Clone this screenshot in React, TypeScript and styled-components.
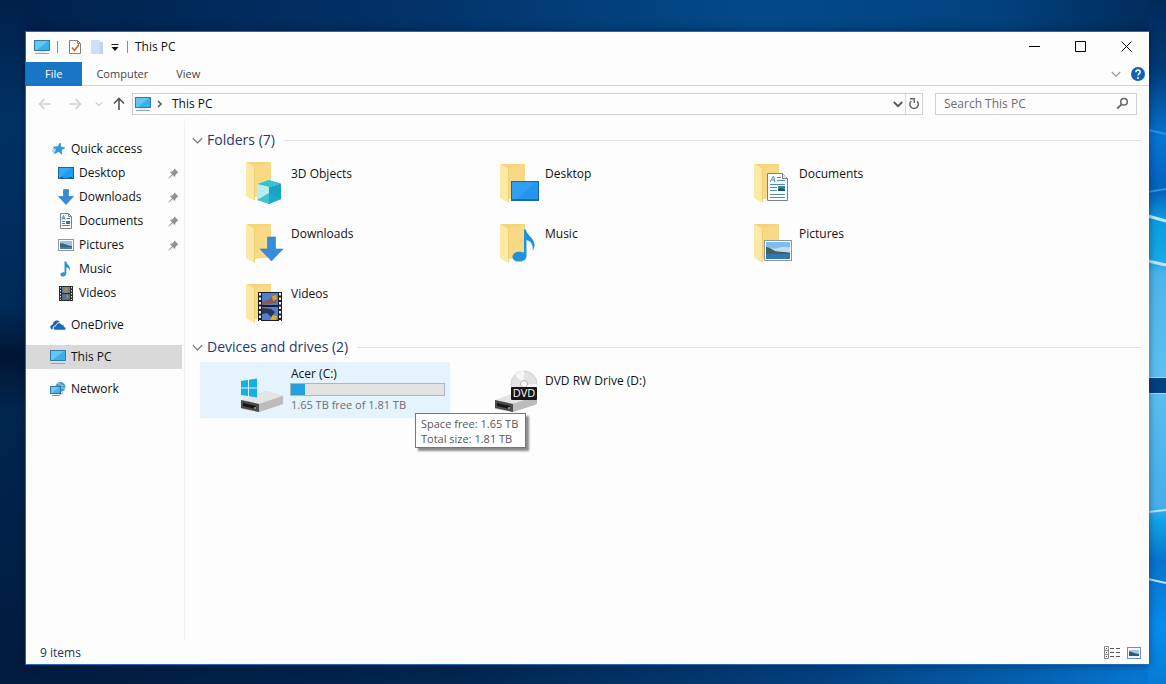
import React from "react";
import styled, { createGlobalStyle } from "styled-components";

const GlobalStyle = createGlobalStyle`
  *, *::before, *::after { box-sizing: border-box; }
  body {
    margin: 0;
    font-family: "Open Sans", "Noto Sans", sans-serif;
    font-size: 12px;
    line-height: 16px;
    color: #111;
  }
  button, input { font: inherit; color: inherit; }
  h1, h2, ul { margin: 0; padding: 0; font-weight: 400; }
  ul { list-style: none; }
`;

/* ---------- Layout ---------- */

const Desktop = styled.div`
  position: relative;
  isolation: isolate;
  display: flex;
  min-height: 100vh;
  padding: 31px 17px 19px 25px;
  background: #00244d;
`;

const Wallpaper = styled.svg`
  position: absolute;
  inset: 0;
  z-index: -1;
  width: 100%;
  height: 100%;
`;

const Window = styled.main`
  flex: 1;
  min-width: 0;
  display: flex;
  flex-direction: column;
  border: 1px solid #1a6eb8;
  border-right-width: 0;
  background: #fdfdfd;
  box-shadow: 0 0 8px rgba(0, 10, 40, 0.45);
`;

const TitleBar = styled.header`
  display: flex;
  height: 30px;
  padding-left: 7px;
`;

const QuickTools = styled.div`
  display: flex;
  align-items: center;
  flex: 1;
`;

const IconButton = styled.button<{ $w: number; $h?: number }>`
  display: flex;
  align-items: center;
  justify-content: center;
  width: ${(p) => p.$w}px;
  height: ${(p) => p.$h ?? 20}px;
  padding: 0;
  border: 0;
  background: transparent;
`;

const Divider = styled.span`
  width: 1px;
  height: 12px;
  margin: 0 7px 0 6px;
  background: #8b8b8b;
`;

const Title = styled.h1`
  font-size: 12px;
  line-height: 16px;
`;

const Ribbon = styled.nav`
  display: flex;
  align-items: center;
  height: 24px;
  border-bottom: 1px solid #d4d5d6;
  color: #444;
`;

const Tab = styled.button<{ $active?: boolean }>`
  height: 24px;
  margin-bottom: -1px;
  padding: ${(p) => (p.$active ? "0 20px 0 19px" : "0 14px")};
  border: 0;
  background: ${(p) => (p.$active ? "#1976c5" : "transparent")};
  color: ${(p) => (p.$active ? "#fff" : "#444")};
  font-size: 11px;
`;

const Spacer = styled.span`
  flex: 1;
`;

const AddressRow = styled.div`
  display: flex;
  align-items: center;
  height: 35px;
  padding: 0 12px 0 6px;
`;

const AddressBox = styled.div`
  display: flex;
  align-items: center;
  flex: 1;
  height: 22px;
  border: 1px solid #d0d0d0;
`;

const Crumbs = styled.div`
  flex: 1;
  padding-left: 5px;
`;

const Crumb = styled.a`
  color: #111;
  text-decoration: none;
`;

const Refresh = styled(IconButton)`
  border-left: 1px solid #d9d9d9;
`;

const SearchBox = styled.label`
  display: flex;
  align-items: center;
  width: 202px;
  height: 22px;
  margin-left: 12px;
  padding: 0 7px 0 8px;
  border: 1px solid #d0d0d0;
`;

const SearchInput = styled.input`
  flex: 1;
  min-width: 0;
  padding: 0;
  border: 0;
  outline: 0;
  background: transparent;
  &::placeholder { color: #6d6d6d; opacity: 1; }
`;

const Body = styled.div`
  display: flex;
  flex: 1;
`;

const Sidebar = styled.nav`
  width: 159px;
  padding: 16px 2px 0 0;
  border-right: 1px solid #f0f0f0;
`;

const NavGroup = styled.ul`
  margin-bottom: 8px;
`;

const NavLink = styled.a<{ $level: number; $current?: boolean }>`
  display: flex;
  align-items: center;
  height: 24px;
  gap: 5px;
  padding: 0 0 0 ${(p) => (p.$level ? 32 : 24)}px;
  background: ${(p) => (p.$current ? "#d9d9d9" : "transparent")};
  color: #111;
  text-decoration: none;
`;

const NavLabel = styled.span`
  flex: 1;
`;

const PinSlot = styled.span`
  display: flex;
  padding-right: 3px;
`;

const Content = styled.div`
  flex: 1;
  min-width: 0;
  padding: 8px 8px 0 7px;
`;

const SectionHeader = styled.div`
  display: flex;
  align-items: center;
  height: 22px;
`;

const SectionTitle = styled.h2`
  padding: 0 9px 0 4px;
  font-size: 14px;
  line-height: 22px;
  color: #1f3a6e;
`;

const Rule = styled.span`
  flex: 1;
  height: 1px;
  background: #e2e2e2;
`;

const Tiles = styled.ul`
  display: grid;
  grid-template-columns: repeat(auto-fill, 250px);
  gap: 4px;
  padding: 4px 0 5px 8px;
`;

const Tile = styled.li<{ $hover?: boolean }>`
  position: relative;
  display: flex;
  height: 56px;
  padding: 4px 5px 0 40px;
  background: ${(p) => (p.$hover ? "#e5f3fd" : "transparent")};
`;

const TileLink = styled.a<{ $drive?: boolean }>`
  display: flex;
  flex: 1;
  gap: ${(p) => (p.$drive ? 2 : 3)}px;
  color: #111;
  text-decoration: none;
`;

const TileText = styled.div<{ $drive?: boolean }>`
  flex: 1;
  display: flex;
  flex-direction: column;
  padding-top: ${(p) => (p.$drive ? 0 : 7)}px;
`;

const DriveLabel = styled.span<{ $muted?: boolean }>`
  padding-left: 1px;
  font-size: ${(p) => (p.$muted ? 11 : 12)}px;
  line-height: 16px;
  color: ${(p) => (p.$muted ? "#6d6d6d" : "#111")};
`;

const Meter = styled.div`
  height: 13px;
  margin: 1px 0;
  border: 1px solid #a9b7c4;
  background: #e3e3e3;
`;

const MeterFill = styled.div`
  height: 100%;
  background: #26a0da;
`;

const Tooltip = styled.div`
  position: absolute;
  left: 215px;
  top: 51px;
  z-index: 1;
  padding: 2px 7px 1px 5px;
  border: 1px solid #767676;
  background: #fff;
  box-shadow: 3px 3px 2px rgba(0, 0, 0, 0.45);
  font-size: 11px;
  line-height: 15px;
  color: #575757;
  white-space: pre;
`;

const StatusBar = styled.footer`
  display: flex;
  align-items: center;
  height: 23px;
  padding: 0 4px 0 14px;
  color: #1f3357;
`;

/* ---------- Icons ---------- */

const MonitorIcon = ({ compact = false }: { compact?: boolean }) => (
  <svg width={compact ? 16 : 18} height="16" viewBox={compact ? "1 0 16 16" : "0 0 18 16"}>
    <rect x="1.5" y="1.5" width="15" height="10" fill="#36b1ee" stroke="#337ba5" />
    <path d="M2 2h13L4 11H2z" fill="#7cd2f8" opacity=".65" />
    <path d="M2 14.500h14" stroke="#8aa9bd" />
    <path d="M5 13h8" stroke="#cfdbe2" />
  </svg>
);

const PropertiesIcon = () => (
  <svg width="14" height="16" viewBox="0 0 14 16">
    <path d="M1.500 1.500h8l3 3v10h-11z" fill="#fff" stroke="#8b7f7a" />
    <path d="M9.500 1.500v3h3" fill="none" stroke="#8b7f7a" />
    <path d="M4 8.500l2.500 3L11 5.500" fill="none" stroke="#d2602f" strokeWidth="1.600" />
  </svg>
);

const NewFolderIcon = () => (
  <svg width="14" height="16" viewBox="0 0 14 16">
    <path d="M1 1h9v2h3v12H1z" fill="#cfdff4" />
    <path d="M10 3h3v12h-3z" fill="#bfd2ec" />
  </svg>
);

const CustomizeIcon = () => (
  <svg width="8" height="9" viewBox="0 0 8 9">
    <path d="M.5 1.500h7" stroke="#222" />
    <path d="M.5 4h7L4 8z" fill="#111" />
  </svg>
);

const Chevron = ({ color = "#777", width = 1.2, size = 10 }: { color?: string; width?: number; size?: number }) => (
  <svg width={size} height={size} viewBox="0 0 10 10">
    <path d="M.8 3L5 7.200 9.200 3" fill="none" stroke={color} strokeWidth={width} />
  </svg>
);

const ArrowIcon = ({ dir, color }: { dir: number; color: string }) => (
  <svg width="14" height="14" viewBox="0 0 14 14">
    <path
      d="M13 7H2M6.500 2L1.500 7l5 5"
      transform={`rotate(${dir} 7 7)`}
      fill="none"
      stroke={color}
      strokeWidth="1.600"
    />
  </svg>
);

const RefreshIcon = () => (
  <svg width="12" height="13" viewBox="0 0 12 13">
    <path d="M3.200 4.200A4.200 4.200 0 1 0 9 4.200" fill="none" stroke="#666" strokeWidth="1.500" />
    <path d="M2 1.700h4.300v4.300" fill="none" stroke="#666" strokeWidth="1.400" />
  </svg>
);

const SearchIcon = () => (
  <svg width="13" height="13" viewBox="0 0 13 13">
    <circle cx="8" cy="4.800" r="3.300" fill="none" stroke="#666" strokeWidth="1.500" />
    <path d="M5.500 7.300L1.200 11.600" stroke="#666" strokeWidth="1.900" />
  </svg>
);

const HelpIcon = () => (
  <svg width="14" height="14" viewBox="0 0 14 14">
    <circle cx="7" cy="7" r="7" fill="#0f62b8" />
    <path d="M4.900 5.300c0-3 4.500-2.800 4.300-.2C9.100 6.700 7 6.700 7 8.600" fill="none" stroke="#fff" strokeWidth="1.500" />
    <circle cx="7" cy="10.900" r="1" fill="#fff" />
  </svg>
);

const StarIcon = () => (
  <svg width="16" height="16" viewBox="0 0 16 16">
    <path d="M10.300 2l.5 4 4 .8-3.500 2.100.6 4.300-3.200-2.800-3.800 2.200 1.300-4.100L3.400 6l4.200-.2z" fill="#2f9be0" stroke="#2180bd" strokeWidth=".6" />
    <path d="M2.500 7.500l2.500 1M2 10h3.500M3 12.500l2-1.500" stroke="#5ab0e6" />
  </svg>
);

const DesktopIcon = () => (
  <svg width="16" height="16" viewBox="0 0 16 16">
    <rect x=".5" y="2.500" width="15" height="11" fill="#1f9bf0" stroke="#1b659c" />
    <path d="M1 3h11L2 13H1z" fill="#48b3f8" opacity=".6" />
    <path d="M2 12.500h3M11 12.500h3" stroke="#0f5e9c" />
  </svg>
);

const DownIcon = () => (
  <svg width="16" height="16" viewBox="0 0 16 16">
    <path d="M5.500 0.500h5v7H15.500L8 15.500.5 7.500h5z" fill="#388bd6" stroke="#2f76b8" strokeWidth=".6" />
  </svg>
);

const DocIcon = () => (
  <svg width="16" height="16" viewBox="0 0 16 16">
    <path d="M2.500.5h8l3 3v12h-11z" fill="#fff" stroke="#7a848c" />
    <path d="M10.500.5v3h3" fill="none" stroke="#7a848c" />
    <path d="M4 6.500l1.500-4L7 6.500M4.500 5.500h2M8.500 5.500H12M4 8.500h3M4 10.500h3M4 12.500h8" fill="none" stroke="#3e86b5" />
    <rect x="8" y="8" width="4" height="3" fill="#2d76aa" />
  </svg>
);

const PictureIcon = () => (
  <svg width="16" height="16" viewBox="0 0 16 16">
    <rect x=".5" y="2.500" width="15" height="11" fill="#fff" stroke="#8d979f" />
    <rect x="2" y="4" width="12" height="8" fill="#8fc6ec" />
    <path d="M2 6.500c3-1 5 1.500 12 2.500v1H2z" fill="#3d6477" />
    <path d="M2 10h12v2H2z" fill="#3b80b4" />
  </svg>
);

const NoteIcon = () => (
  <svg width="16" height="16" viewBox="0 0 16 16">
    <path d="M6.500.5h1.800c.4 3.500 4.700 4 3.500 9.200C11.500 7.700 10 6.600 8.300 6.300v6.200c0 3.500-5.800 4-5.800 1.200 0-2.200 2.500-2.800 4-2.200z" fill="#2795d4" />
  </svg>
);

const FilmIcon = () => (
  <svg width="16" height="16" viewBox="0 0 16 16">
    <rect x="1" y="1" width="14" height="15" fill="#2c2b2b" />
    <rect x="4" y="2" width="8" height="6" fill="#667fa5" />
    <rect x="4" y="9" width="8" height="6" fill="#55709a" />
    <path d="M7 2l3 2-1 3-3 1zM9 9l2 3-3 2z" fill="#b58c35" />
    <path d="M2.500 2v13M13.500 2v13" stroke="#dcdcdc" strokeDasharray="1.500 1.500" />
  </svg>
);

const CloudIcon = () => (
  <svg width="16" height="16" viewBox="0 0 16 16">
    <path d="M2.800 12.500C-.6 12.200-.3 8 2.600 7.800 2.800 4 7.500 2 10 5.200 7.500 5 6 6.500 5.700 8.300 3.600 8.600 2.200 10.500 2.800 12.500z" fill="#1761b4" />
    <path d="M5.600 13C2.600 13 2.900 9.200 5.800 9.100 6 5.500 10.500 4.900 11.800 7.800c2 0 2.600 1 2.500 2.300 2 .3 1.900 2.900 0 2.900z" fill="#1469be" stroke="#fdfdfd" strokeWidth=".5" />
  </svg>
);

const NetworkIcon = () => (
  <svg width="16" height="16" viewBox="0 0 16 16">
    <circle cx="10.500" cy="6" r="5" fill="#4e9fc4" />
    <path d="M8 2.500c3 0 2 2.500 5 2M9 8c2-3 4 0 6-1" stroke="#a7dbe3" fill="none" />
    <rect x=".5" y="5.500" width="10" height="7" fill="#45b4ee" stroke="#2976a8" />
    <path d="M1 6h8l-7 6H1z" fill="#93d8f8" opacity=".6" />
    <path d="M2 14.500h7l4-3" stroke="#7698ac" fill="none" />
  </svg>
);

const PinIcon = () => (
  <svg width="11" height="11" viewBox="0 0 11 11">
    <path d="M6.500.5l4 4-1.300.6-1.800 1.800-.3 2.300L4.800 6.900 1 10.500l-.5-.5 3.600-3.800L1.800 3.900l2.300-.3L5.900 1.800z" fill="#8c9298" />
  </svg>
);

const DetailsViewIcon = () => (
  <svg width="17" height="13" viewBox="0 0 17 13">
    <path d="M.5.500h4v12h-4zM.5 4.500h4M.5 8.500h4" fill="none" stroke="#888" />
    <path d="M2 2.500h1M2 6.500h1M2 10.500h1M6 2.500h4M12 2.500h4M6 6.500h4M12 6.500h4M6 10.500h4M12 10.500h4" stroke="#555" />
  </svg>
);

const LargeViewIcon = () => (
  <svg width="14" height="12" viewBox="0 0 14 12">
    <rect x=".5" y=".5" width="13" height="11" fill="#f3f8fc" stroke="#6d8fb8" />
    <rect x="2" y="3" width="10" height="6" fill="#a5c8e2" />
    <path d="M2 4.500c3 0 5 2 10 2.500v2H2z" fill="#36596e" />
  </svg>
);

const FolderArt = ({ y = 5, children }: { y?: number; children?: React.ReactNode }) => (
  <svg width="48" height="48" viewBox="0 0 48 48">
    <g transform={`translate(0 ${y})`}>
      <path d="M7 0h24v33L14 35z" fill="#f5d47b" />
      <path d="M15 4l16-4v32l-16 2z" fill="#fadc8b" opacity=".7" />
      <path d="M6 0l8.500 4.500V39L6 34z" fill="#fde8a4" />
      <path d="M14.500 4.500V38" stroke="#efca6c" strokeWidth=".8" />
    </g>
    {children}
  </svg>
);

const Art3D = () => (
  <FolderArt y={3}>
    <path d="M17 25l12-4 12 3.500-12 3.500z" fill="#2fc3d6" />
    <path d="M17 25l12 3v17l-12-4z" fill="#b9edf2" />
    <path d="M29 28l12-3.500V40l-12 5z" fill="#16a5c4" />
    <path d="M17 41l12-7 12 6-12 5z" fill="#1cb0c8" opacity=".75" />
  </FolderArt>
);

const ArtDesktop = () => (
  <FolderArt>
    <rect x="17.500" y="22.500" width="27" height="19" fill="#2397ee" stroke="#1d639c" />
    <path d="M18 23h24L22 41h-4z" fill="#3aa6f5" opacity=".55" />
    <path d="M18 40.500h26" stroke="#1671b8" />
  </FolderArt>
);

const ArtDocuments = () => (
  <FolderArt>
    <path d="M19.500 14.500h15l5 5v22h-20z" fill="#fff" stroke="#7a8288" />
    <path d="M34.500 14.500v5h5" fill="#edf1f4" stroke="#7a8288" />
    <path d="M22 23l3.500-6 1.500 6M23.500 21h3M29 18.500h4M29 21.500h8M22 25.500h15M22 28.500h7M22 31.500h7M22 35.500h15M22 38.500h15" fill="none" stroke="#4b8eb8" />
    <rect x="30" y="27" width="7" height="5" fill="#3c83b4" />
    <path d="M30 30l3-1 4 1.500V32h-7z" fill="#2b4e66" />
  </FolderArt>
);

const ArtDownloads = () => (
  <FolderArt>
    <path d="M27.500 18h8v12h7.500L31.500 42 20 30h7.500z" fill="#358ddc" stroke="#2e7dc4" strokeWidth=".6" />
  </FolderArt>
);

const ArtMusic = () => (
  <FolderArt>
    <path d="M30 10.500h2c.7 7 13.500 10.500 6.500 21.500 1.500-6-2-10-6-11v16c0 7-14 7.500-14 1 0-5 6.500-6.500 11.500-4.500z" fill="#1f93dc" />
  </FolderArt>
);

const ArtPictures = () => (
  <FolderArt>
    <rect x="16.500" y="21.500" width="27" height="20" fill="#fff" stroke="#8b979f" />
    <rect x="18" y="23" width="24" height="17" fill="#7fbcf0" />
    <path d="M18 30c4-3 6 1 12-1s8 0 12-1v5H18z" fill="#e6f2f8" opacity=".6" />
    <path d="M18 28c5 0 6 4 12 4.500s8 .5 12 1.500v1H18z" fill="#426257" />
    <path d="M18 35h24v5H18z" fill="#2f79ad" />
  </FolderArt>
);

const ArtVideos = () => (
  <FolderArt>
    <rect x="18" y="13" width="24" height="29" fill="#1f1f22" />
    <rect x="22" y="14" width="16" height="12" fill="#4f7fd0" />
    <rect x="22" y="28" width="16" height="13" fill="#4f7fd0" />
    <path d="M22 23l8-3 3-4 4 3-1 5-6 1-8 1z" fill="#8b5b52" />
    <path d="M32 17l4-1 1 4-4 2z" fill="#d6a42d" />
    <path d="M22 29l9 1 4 3-4 5-4-4-5 1z" fill="#30324f" />
    <path d="M33 36l4 1-1 4h-6z" fill="#e2ac24" />
    <path d="M20 14v28M40 14v28" stroke="#f0f0f0" strokeWidth="2" strokeDasharray="2.500 2" />
  </FolderArt>
);

const DriveBody = () => (
  <>
    <path d="M1 35l25-10 17 5v8L19 46 1 43z" fill="#c9c9c9" />
    <path d="M1 34l25-9 17 5-24 8z" fill="#e4e4e4" />
    <path d="M1 34l18 4v8L1 42z" fill="#4a4a4a" />
    <path d="M19 38l24-8v8l-24 8z" fill="#bcbcbc" />
    <path d="M3 37l13 3v3L3 40z" fill="#151515" />
    <circle cx="15" cy="42" r="1" fill="#7dc383" />
  </>
);

const ArtDisk = () => (
  <svg width="48" height="48" viewBox="0 0 48 48">
    <DriveBody />
    <path d="M1 15l7-1v7.500H1zM9 13.800l8-1.300v9H9zM1 22.500h7V30l-7-1zM9 22.500h8v9l-8-1.300z" fill="#12b0e8" />
  </svg>
);

const DvdLabel = styled.text`
  font-family: "Open Sans", sans-serif;
  font-size: 11px;
  fill: #fff;
`;

const ArtDvd = () => (
  <svg width="48" height="48" viewBox="0 0 48 48">
    <DriveBody />
    <circle cx="30" cy="18" r="13" fill="#e2e2e2" stroke="#c6c6c6" strokeWidth=".7" />
    <path d="M30 18L21 9a13 13 0 0 1 9-4zM30 18l9 9a13 13 0 0 0 4-9z" fill="#f6f6f6" />
    <circle cx="30" cy="18" r="3.500" fill="#fff" stroke="#b5b5b5" />
    <rect x="17" y="21" width="26" height="13" rx="1" fill="#161616" />
    <DvdLabel x="30" y="31" textAnchor="middle">DVD</DvdLabel>
  </svg>
);

/* ---------- Data ---------- */

const quickAccess = [
  { name: "Desktop", icon: <DesktopIcon />, pinned: true },
  { name: "Downloads", icon: <DownIcon />, pinned: true },
  { name: "Documents", icon: <DocIcon />, pinned: true },
  { name: "Pictures", icon: <PictureIcon />, pinned: true },
  { name: "Music", icon: <NoteIcon />, pinned: false },
  { name: "Videos", icon: <FilmIcon />, pinned: false },
];

const places = [
  { name: "OneDrive", icon: <CloudIcon />, current: false },
  { name: "This PC", icon: <MonitorIcon compact />, current: true },
  { name: "Network", icon: <NetworkIcon />, current: false },
];

const folders = [
  { name: "3D Objects", art: <Art3D /> },
  { name: "Desktop", art: <ArtDesktop /> },
  { name: "Documents", art: <ArtDocuments /> },
  { name: "Downloads", art: <ArtDownloads /> },
  { name: "Music", art: <ArtMusic /> },
  { name: "Pictures", art: <ArtPictures /> },
  { name: "Videos", art: <ArtVideos /> },
];

const usedShare = 1 - 1.65 / 1.81;

const Section = ({ title, children }: { title: string; children: React.ReactNode }) => (
  <section>
    <SectionHeader>
      <IconButton $w={11} aria-label={`Collapse ${title}`}>
        <Chevron color="#6f7780" size={11} width={1.1} />
      </IconButton>
      <SectionTitle>{title}</SectionTitle>
      <Rule />
    </SectionHeader>
    <Tiles>{children}</Tiles>
  </section>
);

const Backdrop = () => (
  <Wallpaper viewBox="0 0 1166 684" preserveAspectRatio="none" aria-hidden="true">
    <defs>
      <linearGradient id="top">
        <stop offset="0" stopColor="#00204a" />
        <stop offset=".35" stopColor="#023268" />
        <stop offset=".65" stopColor="#034a8a" />
        <stop offset=".85" stopColor="#02427f" />
        <stop offset="1" stopColor="#012a57" />
      </linearGradient>
      <linearGradient id="bottom">
        <stop offset="0" stopColor="#001b3d" />
        <stop offset=".4" stopColor="#01264f" />
        <stop offset=".7" stopColor="#033f7c" />
        <stop offset=".9" stopColor="#0563b4" />
        <stop offset="1" stopColor="#067bd6" />
      </linearGradient>
      <linearGradient id="left" x2="0" y2="1">
        <stop offset="0" stopColor="#00204a" />
        <stop offset=".17" stopColor="#003264" />
        <stop offset=".45" stopColor="#002a58" />
        <stop offset=".52" stopColor="#001634" />
        <stop offset=".6" stopColor="#00264f" />
        <stop offset="1" stopColor="#001b3d" />
      </linearGradient>
      <linearGradient id="right" x2="0" y2="1">
        <stop offset="0" stopColor="#012a57" />
        <stop offset=".1" stopColor="#013a78" />
        <stop offset=".2" stopColor="#0673d2" />
        <stop offset=".28" stopColor="#0562bd" />
        <stop offset=".32" stopColor="#0b9be0" />
        <stop offset=".38" stopColor="#15a9e6" />
        <stop offset=".4" stopColor="#4fb4ec" />
        <stop offset=".55" stopColor="#5cc0f2" />
        <stop offset=".74" stopColor="#48aeec" />
        <stop offset=".76" stopColor="#12a4e6" />
        <stop offset=".82" stopColor="#0774cf" />
        <stop offset=".92" stopColor="#078cec" />
        <stop offset="1" stopColor="#067bd6" />
      </linearGradient>
    </defs>
    <rect width="1166" height="342" fill="url(#top)" />
    <rect y="342" width="1166" height="342" fill="url(#bottom)" />
    <rect width="26" height="684" fill="url(#left)" />
    <rect x="1148" width="18" height="684" fill="url(#right)" />
    <path d="M1148 130l18 4M1148 192l18-3" stroke="#2b93e4" strokeWidth="2" />
    <path d="M1148 216l18 5M1148 261l18 4" stroke="#bfe9fa" strokeWidth="3" />
    <rect x="1148" y="378" width="18" height="15" fill="#034181" />
    <path d="M1148 377.500h18M1148 393.500h18" stroke="#9fdcf8" />
    <path d="M1148 512l18-2M1148 579l18 4" stroke="#b5e3f8" strokeWidth="2" />
  </Wallpaper>
);

/* ---------- App ---------- */

export default function App() {
  return (
    <>
      <GlobalStyle />
      <Desktop>
        <Backdrop />
        <Window>
          <TitleBar>
            <QuickTools>
              <MonitorIcon />
              <Divider />
              <IconButton $w={20} aria-label="Properties"><PropertiesIcon /></IconButton>
              <IconButton $w={24} aria-label="New folder"><NewFolderIcon /></IconButton>
              <IconButton $w={12} aria-label="Customize toolbar"><CustomizeIcon /></IconButton>
              <Divider />
              <Title>This PC</Title>
            </QuickTools>
            <IconButton $w={46} $h={29} aria-label="Minimize">
              <svg width="11" height="11"><path d="M0 5.500h11" stroke="#000" /></svg>
            </IconButton>
            <IconButton $w={46} $h={29} aria-label="Maximize">
              <svg width="11" height="11"><path d="M.5.500h10v10H.5z" fill="none" stroke="#000" /></svg>
            </IconButton>
            <IconButton $w={46} $h={29} aria-label="Close">
              <svg width="11" height="11"><path d="M.5.500l10 10M10.500.5l-10 10" stroke="#000" /></svg>
            </IconButton>
          </TitleBar>

          <Ribbon>
            <Tab $active>File</Tab>
            <Tab>Computer</Tab>
            <Tab>View</Tab>
            <Spacer />
            <IconButton $w={22} aria-label="Expand ribbon"><Chevron color="#999" /></IconButton>
            <IconButton $w={22} aria-label="Help"><HelpIcon /></IconButton>
          </Ribbon>

          <AddressRow>
            <IconButton $w={26} aria-label="Back"><ArrowIcon dir={0} color="#d0d0d0" /></IconButton>
            <IconButton $w={34} aria-label="Forward"><ArrowIcon dir={180} color="#d0d0d0" /></IconButton>
            <IconButton $w={14} aria-label="Recent locations"><Chevron color="#ccc" size={8} width={1.4} /></IconButton>
            <IconButton $w={26} aria-label="Up"><ArrowIcon dir={90} color="#555" /></IconButton>
            <AddressBox>
              <IconButton $w={20} aria-label="Location"><MonitorIcon /></IconButton>
              <IconButton $w={14} aria-label="Show sub-locations">
                <svg width="6" height="8"><path d="M1 1l3 3-3 3" fill="none" stroke="#555" strokeWidth="1.500" /></svg>
              </IconButton>
              <Crumbs>
                <Crumb href="#this-pc">This PC</Crumb>
              </Crumbs>
              <IconButton $w={14} aria-label="Previous locations"><Chevron color="#555" width={1.8} /></IconButton>
              <Refresh $w={17} aria-label="Refresh"><RefreshIcon /></Refresh>
            </AddressBox>
            <SearchBox>
              <SearchInput type="text" placeholder="Search This PC" aria-label="Search This PC" />
              <SearchIcon />
            </SearchBox>
          </AddressRow>

          <Body>
            <Sidebar>
              <NavGroup>
                <li>
                  <NavLink $level={0} href="#quick-access"><StarIcon /><NavLabel>Quick access</NavLabel></NavLink>
                </li>
                {quickAccess.map((item) => (
                  <li key={item.name}>
                    <NavLink $level={1} href={`#${item.name.toLowerCase()}`}>
                      {item.icon}
                      <NavLabel>{item.name}</NavLabel>
                      {item.pinned && <PinSlot><PinIcon /></PinSlot>}
                    </NavLink>
                  </li>
                ))}
              </NavGroup>
              {places.map((place) => (
                <NavGroup key={place.name}>
                  <li>
                    <NavLink $level={0} $current={place.current} href={`#${place.name}`}>
                      {place.icon}
                      <NavLabel>{place.name}</NavLabel>
                    </NavLink>
                  </li>
                </NavGroup>
              ))}
            </Sidebar>

            <Content>
              <Section title="Folders (7)">
                {folders.map((folder) => (
                  <Tile key={folder.name}>
                    <TileLink href={`#${folder.name}`}>
                      {folder.art}
                      <TileText>{folder.name}</TileText>
                    </TileLink>
                  </Tile>
                ))}
              </Section>
              <Section title="Devices and drives (2)">
                <Tile $hover>
                  <TileLink $drive href="#acer">
                    <ArtDisk />
                    <TileText $drive>
                      <DriveLabel>Acer (C:)</DriveLabel>
                      <Meter role="meter" aria-label="Space used" aria-valuenow={Math.round(usedShare * 100)}>
                        <MeterFill style={{ width: `${usedShare * 100}%` }} />
                      </Meter>
                      <DriveLabel $muted>1.65 TB free of 1.81 TB</DriveLabel>
                    </TileText>
                  </TileLink>
                  <Tooltip role="tooltip">{"Space free: 1.65 TB\nTotal size: 1.81 TB"}</Tooltip>
                </Tile>
                <Tile>
                  <TileLink href="#dvd">
                    <ArtDvd />
                    <TileText>DVD RW Drive (D:)</TileText>
                  </TileLink>
                </Tile>
              </Section>
            </Content>
          </Body>

          <StatusBar>
            <span>9 items</span>
            <Spacer />
            <IconButton $w={22} aria-label="Details view"><DetailsViewIcon /></IconButton>
            <IconButton $w={22} aria-label="Large icons view"><LargeViewIcon /></IconButton>
          </StatusBar>
        </Window>
      </Desktop>
    </>
  );
}
